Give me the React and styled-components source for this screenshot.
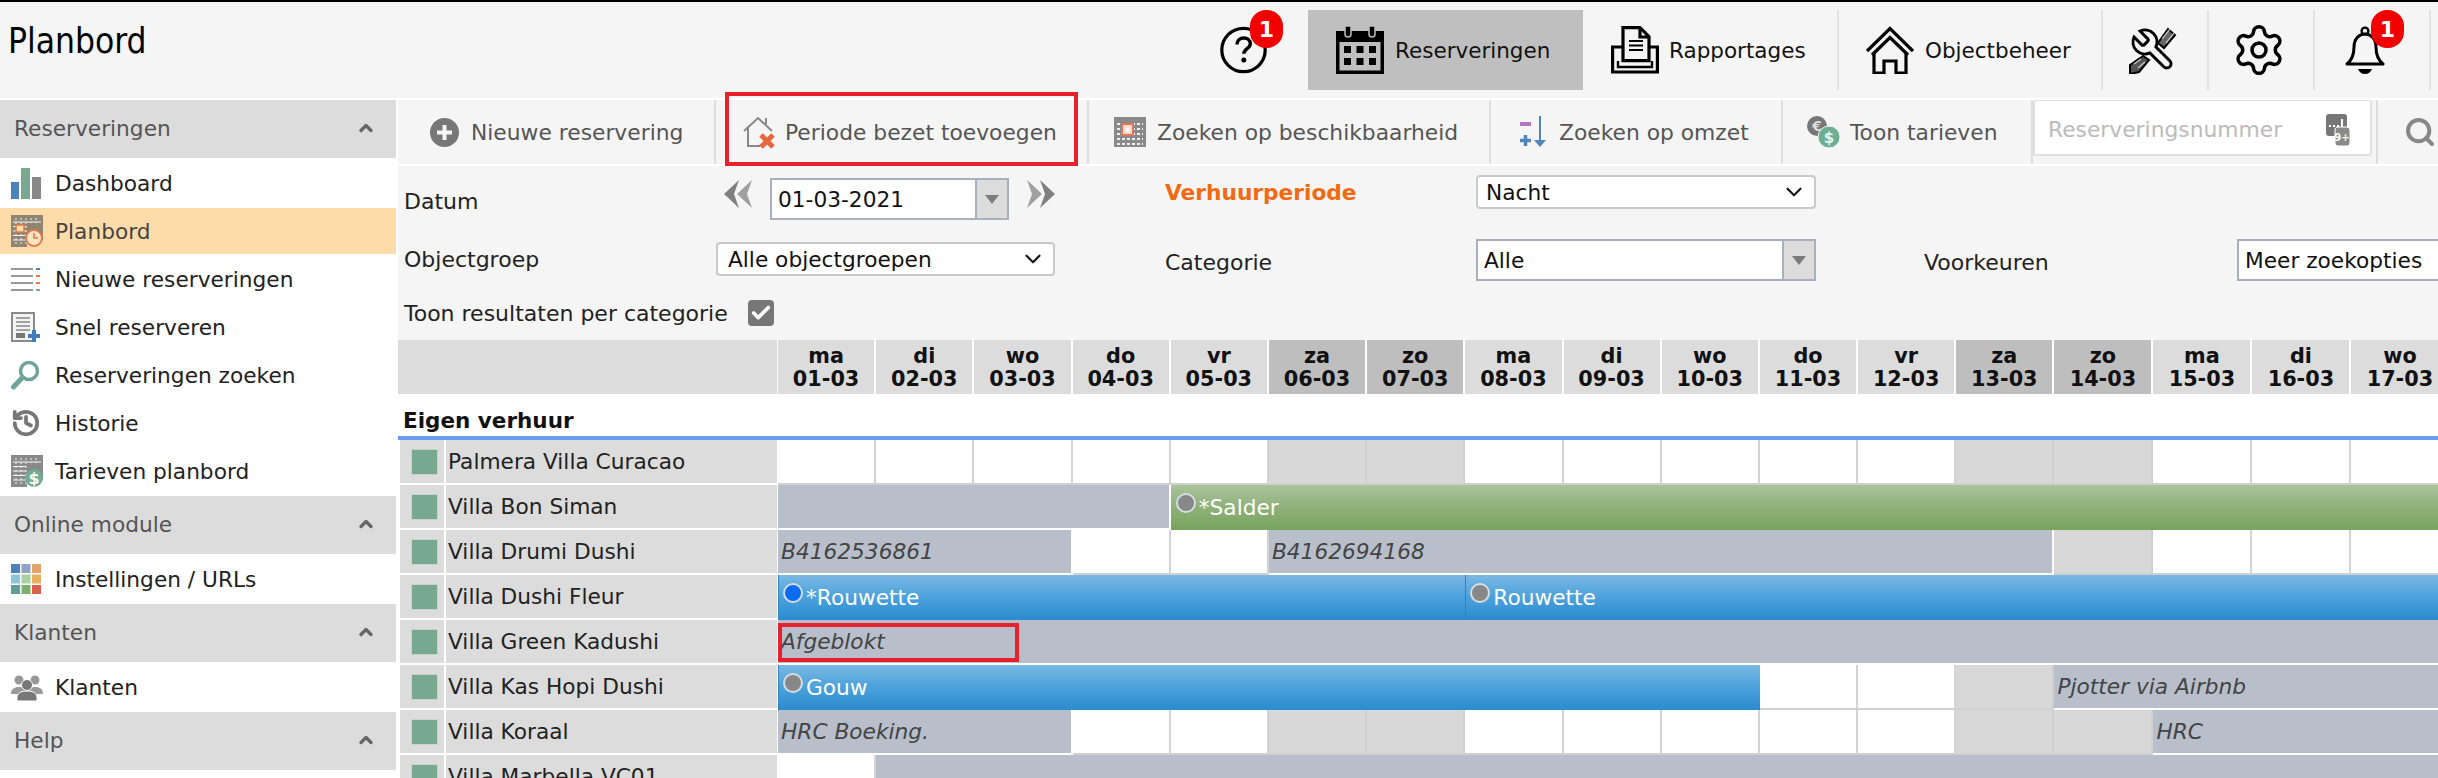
import React from "react";
import styled, { createGlobalStyle } from "styled-components";
import { Check, ChevronDown, ChevronUp, History, Search, Settings } from "lucide-react";

const GlobalStyle = createGlobalStyle`
  html, body {
    margin: 0;
    padding: 0;
    background: #fff;
    font-family: "DejaVu Sans", Verdana, sans-serif;
    font-size: 21.7px;
    overflow: hidden;
  }
  * { box-sizing: border-box; }
`;

const Page = styled.div`
  width: 2438px;
  height: 778px;
  overflow: hidden;
  display: flex;
  flex-direction: column;
`;

/* ---------- top bar ---------- */
const TopBar = styled.header`
  height: 98px;
  flex: none;
  border-top: 2px solid #000;
  background: #f5f5f5;
  display: flex;
  align-items: flex-start;
  justify-content: space-between;
  padding: 8px 7px 0 8px;
`;
const Title = styled.h1`
  margin: 11px 0 0;
  font-family: "DejaVu Sans Condensed", "DejaVu Sans", sans-serif;
  font-stretch: condensed;
  font-weight: 400;
  font-size: 35px;
  line-height: 40px;
  color: #000;
`;
const Nav = styled.nav`
  display: flex;
`;
const NavItem = styled.a`
  width: ${(p) => p.$w}px;
  height: 80px;
  padding-left: ${(p) => p.$pl}px;
  display: flex;
  align-items: center;
  gap: ${(p) => p.$gap || 10}px;
  color: #111;
  font-size: 21.5px;
  background: ${(p) => (p.$active ? "#bfbfbf" : "transparent")};
  border-right: ${(p) => (p.$active || p.$plain ? "0" : "2px solid #e2e2e2")};
`;
const IconWrap = styled.span`
  position: relative;
  display: flex;
  flex: none;
`;
const Badge = styled.span`
  position: absolute;
  top: -16px;
  left: ${(p) => p.$left}px;
  width: 33px;
  height: 38px;
  border-radius: 16px;
  background: #f20000;
  color: #fff;
  font-weight: 700;
  font-size: 22px;
  display: flex;
  align-items: center;
  justify-content: center;
`;

/* ---------- body ---------- */
const Body = styled.div`
  flex: 1;
  display: flex;
  gap: 2px;
  padding-top: 2px;
  min-height: 0;
`;
const Sidebar = styled.aside`
  width: 396px;
  flex: none;
`;
const GroupHead = styled.div`
  height: 58px;
  padding: 0 20px 2px 14px;
  background: #dcdcdc;
  color: #555;
  display: flex;
  align-items: center;
  justify-content: space-between;
`;
const MenuList = styled.div`
  padding-top: 2px;
`;
const MenuItem = styled.a`
  height: 46px;
  margin-bottom: 2px;
  padding-left: 11px;
  display: grid;
  grid-template-columns: 32px auto;
  justify-content: start;
  align-items: center;
  column-gap: 12px;
  color: ${(p) => (p.$active ? "#444" : "#222")};
  background: ${(p) => (p.$active ? "#fddcaa" : "transparent")};
`;

const Main = styled.main`
  flex: 1;
  min-width: 0;
`;
const Toolbar = styled.div`
  height: 66px;
  border-bottom: 2px solid #fff;
  background: #f5f5f5;
  display: flex;
  color: #555;
  font-size: 21.8px;
`;
const ToolItem = styled.a`
  position: relative;
  flex: none;
  width: ${(p) => p.$w}px;
  padding-left: ${(p) => p.$pl}px;
  display: flex;
  align-items: center;
  gap: ${(p) => p.$gap || 10}px;
  border-right: 2px solid #dedede;
  svg { flex: none; }
`;
const Highlight = styled.span`
  position: absolute;
  left: 9px;
  right: 9px;
  top: -8px;
  bottom: -2px;
  border: 4px solid #e6202c;
  pointer-events: none;
`;
const SearchBox = styled.div`
  width: 339px;
  height: 56px;
  margin: 0 4px 0 0;
  padding: 4px 20px 0 13px;
  flex: none;
  display: flex;
  align-items: center;
  justify-content: space-between;
  background: #fff;
  border: 2px solid #e0e0e0;
  border-top-width: 1px;
  border-radius: 3px;
  color: #bbb;
`;
const SearchButton = styled.a`
  flex: 1;
  padding-left: 26px;
  display: flex;
  align-items: center;
  border-left: 2px solid #dedede;
  color: #888;
`;

const Filters = styled.section`
  height: 174px;
  padding: 9px 0 0 6px;
  background: #f5f5f5;
  display: grid;
  grid-template-columns: 312px 449px 311px 448px 313px 1fr;
  grid-template-rows: 64px 57px 1fr;
  align-items: start;
  color: #222;
`;
const Label = styled.span`
  font-size: ${(p) => (p.$bold ? 21.7 : 22)}px;
  line-height: 24px;
  margin-top: ${(p) => p.$mt || 0}px;
  color: ${(p) => p.$color || "inherit"};
  font-weight: ${(p) => (p.$bold ? 700 : 400)};
`;
const DateRow = styled.div`
  padding-left: 8px;
  display: flex;
  gap: 18px;
  align-items: flex-start;
  svg { margin-top: 5px; flex: none; }
`;
const Combo = styled.div`
  width: ${(p) => p.$w}px;
  height: 42px;
  margin-top: ${(p) => p.$mt || 0}px;
  flex: none;
  display: flex;
  justify-content: space-between;
  align-items: center;
  padding-left: 6px;
  border: 2px solid #a9afbd;
  background: #fff;
  color: #111;
  white-space: nowrap;
`;
const ComboButton = styled.span`
  width: 32px;
  height: 100%;
  background: #dcdcdc;
  border-left: 2px solid #a9afbd;
  display: flex;
  align-items: center;
  justify-content: center;
  &::after {
    content: "";
    border: 7px solid transparent;
    border-top: 9px solid #7c7c7c;
    border-bottom: 0;
  }
`;
const Select = styled.div`
  width: ${(p) => p.$w}px;
  height: 34px;
  margin-top: ${(p) => p.$mt || 0}px;
  padding: 0 7px 0 ${(p) => p.$pl || 10}px;
  display: flex;
  align-items: center;
  justify-content: space-between;
  background: #fff;
  border: 2px solid #c9c9c9;
  border-radius: 4px;
  color: #111;
`;
const CheckRow = styled.div`
  grid-column: 1 / span 2;
  margin-top: 4px;
  display: flex;
  align-items: center;
  gap: 20px;
  font-size: 22px;
`;
const CheckBox = styled.span`
  width: 26px;
  height: 26px;
  border-radius: 4px;
  background: #777;
  color: #fff;
  display: flex;
  align-items: center;
  justify-content: center;
`;

/* ---------- planning board ---------- */
const COLUMNS = "380px repeat(13, 98.2px) repeat(4, 99px)";
const HeadRow = styled.div`
  display: grid;
  grid-template-columns: ${COLUMNS};
  height: 54px;
`;
const HeadBlank = styled.div`
  width: 379px;
  background: #dcdcdc;
`;
const DayHead = styled.div`
  background: ${(p) => (p.$weekend ? "#bebebe" : "#dcdcdc")};
  border-right: 2px solid #fff;
  font-weight: 700;
  font-size: 20.8px;
  line-height: 23px;
  text-align: center;
  color: #111;
  padding-top: 5px;
`;
const SectionTitle = styled.div`
  height: 46px;
  padding: 0 0 3px 5px;
  display: flex;
  align-items: flex-end;
  border-bottom: 4px solid #6a9bf0;
  font-weight: 700;
  font-size: 21.5px;
  line-height: 24px;
  color: #111;
`;
const Row = styled.div`
  display: grid;
  grid-template-columns: ${COLUMNS};
  grid-template-rows: 45px;
`;
const RowLabel = styled.div`
  grid-column: 1;
  grid-row: 1;
  height: 43px;
  width: 377px;
  margin-left: 2px;
  display: flex;
  gap: 2px;
`;
const StatusCell = styled.span`
  width: 44px;
  background: #dcdcdc;
  display: flex;
  align-items: center;
  justify-content: center;
  &::after {
    content: "";
    width: 25px;
    height: 24px;
    margin-left: 5px;
    background: #78a890;
    outline: 1px solid #c8d4cc;
  }
`;
const NameCell = styled.span`
  flex: 1;
  padding-left: 2px;
  background: #dcdcdc;
  color: #222;
  display: flex;
  align-items: center;
`;
const DayCell = styled.div`
  grid-row: 1;
  grid-column: ${(p) => p.$col};
  background: ${(p) => (p.$weekend ? "#d8d8d8" : "#fff")};
  border-right: 2px solid ${(p) => (p.$weekend ? "#cfcfcf" : "#d4d4d4")};
  border-bottom: 2px solid #d0d0d0;
`;
const Bar = styled.div`
  position: relative;
  z-index: 1;
  grid-row: 1;
  grid-column: ${(p) => p.$col};
  display: flex;
  align-items: center;
  white-space: nowrap;
  padding-left: 3px;
  ${(p) =>
    p.$kind === "blocked" &&
    `
    background: #b8bfcb;
    background-clip: padding-box;
    border-right: 2px solid #fff;
    border-bottom: 2px solid #fff;
    color: #444;
    font-style: italic;
  `}
  ${(p) =>
    p.$kind === "blue" &&
    `
    background: linear-gradient(#7ab9e3, #4fa3dc 45%, #2a8bd0);
    box-shadow: inset 1px 0 0 #2a84c6;
    color: #fff;
    padding-left: 5px;
  `}
  ${(p) =>
    p.$kind === "green" &&
    `
    background: linear-gradient(#a9c49b, #8eb07a 50%, #79a45c);
    color: #fff;
    padding-left: 5px;
  `}
`;
const Dot = styled.span`
  flex: none;
  width: 20px;
  height: 20px;
  margin: -9px 3px 0 0;
  border-radius: 50%;
  background: ${(p) => p.$color};
  border: 2px solid #d5dde3;
`;
const RedMark = styled.span`
  position: absolute;
  left: 0;
  top: 3px;
  width: 241px;
  height: 39px;
  border: 4px solid #e6202c;
`;

/* ---------- icons: top bar ---------- */
const HelpIcon = () => (
  <svg width="47" height="48" viewBox="0 0 47 48" fill="none" stroke="#000">
    <circle cx="23.5" cy="24" r="21.7" strokeWidth="3.2" />
    <path d="M17 18.5c0-4 3-6.5 6.8-6.5 3.700 0 6.500 2.300 6.500 5.700 0 4.800-6.500 5-6.500 10" strokeWidth="3.400" />
    <circle cx="23.800" cy="34" r="2.500" fill="#000" stroke="none" />
  </svg>
);
const CalendarIcon = () => (
  <svg width="48" height="48" viewBox="0 0 48 48">
    <path d="M0 5h48v43H0z" fill="#000" />
    <path d="M3.500 16h41v28.500h-41z" fill="#bfbfbf" />
    <path d="M8 20h7v7H8zM20.500 20h7v7h-7zM33 20h7v7h-7zM8 32h7v7H8zM20.500 32h7v7h-7zM33 32h7v7h-7z" fill="#000" />
    <path d="M9 0v8a3 3 0 0 0 6 0V0zM33 0v8a3 3 0 0 0 6 0V0z" fill="#000" stroke="#bfbfbf" strokeWidth="1.500" />
  </svg>
);
const ReportIcon = () => (
  <svg width="48" height="48" viewBox="0 0 48 48" fill="none" stroke="#000" strokeWidth="3.200">
    <path d="M12 1.600h17l9 9v24H12z" fill="#f5f5f5" />
    <path d="M29 2v9h9" />
    <path d="M18 15h14M18 19.500h14M18 24h14" strokeWidth="1.800" />
    <path d="M12 21H1.600v25h44.800V21H38" />
    <path d="M7 35v6h34v-6" strokeWidth="2.400" />
  </svg>
);
const HouseIcon = () => (
  <svg width="48" height="48" viewBox="0 0 48 48" fill="none" stroke="#000" strokeWidth="3.200">
    <path d="M1 25 24 2.500 47 25" />
    <path d="M6 29 24 11.500 42 29" />
    <path d="M8 27v20h10V35h12v12h10V27" />
  </svg>
);
const ToolsIcon = () => (
  <svg width="48" height="48" viewBox="0 0 48 48" fill="none" stroke="#000">
    <g transform="translate(48 0) scale(-2 2)" strokeWidth="1.500">
      <path d="M14.700 6.300a1 1 0 0 0 0 1.400l1.600 1.600a1 1 0 0 0 1.400 0l3.770-3.770a6 6 0 0 1-7.940 7.940l-6.910 6.910a2.120 2.120 0 0 1-3-3l6.910-6.910a6 6 0 0 1 7.940-7.940l-3.760 3.760z" />
    </g>
    <path d="M29 17 39 3l7 6-11 13z" fill="#666" strokeWidth="2" />
    <path d="M33 13l8-10M37 17l8-10" stroke="#ddd" strokeWidth="1.200" />
    <path d="M14 30 1 39v9l9-2 10-12z" fill="#555" strokeWidth="2" />
    <path d="M5 38l7-5M9 42l7-6" stroke="#ccc" strokeWidth="1.200" />
  </svg>
);
const BellIcon = () => (
  <svg width="40" height="48" viewBox="0 0 40 48" fill="none" stroke="#000">
    <circle cx="20" cy="5" r="3.400" strokeWidth="2.400" />
    <path d="M2 38c5-4 7-9 7-17 0-8 5-13 11-13s11 5 11 13c0 8 2 13 7 17z" strokeWidth="3" strokeLinejoin="round" />
    <path d="M13 43h14c-1 3-4 5-7 5s-6-2-7-5z" fill="#000" stroke="none" />
  </svg>
);

/* ---------- icons: side menu ---------- */
const GridBase = ({ colour = "#8a8a8a" }) => (
  <>
    <path d="M0 0h32v25H16v7H0z" fill={colour} />
    <path d="M2 7h28M2 11.500h13M2 16h13M2 20.500h13M2 25h13" stroke="#f5f5f5" strokeWidth="1" />
    <path d="M5 3v26M10 3v26M15 3v26M20 3v5M25 3v5" stroke="#f5f5f5" strokeWidth="1" strokeDasharray="2 2" />
  </>
);
const BarsIcon = () => (
  <svg width="30" height="31" viewBox="0 0 30 31">
    <path d="M0 14h8v17H0z" fill="#4a82bd" />
    <path d="M10 0h9v31h-9z" fill="#78a890" />
    <path d="M21 9h9v22h-9z" fill="#888" />
  </svg>
);
const PlanIcon = () => (
  <svg width="32" height="32" viewBox="0 0 32 32">
    <GridBase colour="#8f8572" />
    <path d="M5 10h8v7H5z" fill="#fddcaa" stroke="#e07a4a" strokeWidth="1.500" />
    <circle cx="23" cy="23" r="8" fill="#fde4c4" stroke="#e07a4a" strokeWidth="2" />
    <path d="M23 18v5h4" fill="none" stroke="#e07a4a" strokeWidth="1.600" />
  </svg>
);
const ListIcon = () => (
  <svg width="30" height="24" viewBox="0 0 30 24">
    <path d="M0 2h22M0 9h22M0 16h22M0 23h22" stroke="#999" strokeWidth="2" />
    <path d="M25 2h4" stroke="#4a82bd" strokeWidth="2" />
    <path d="M25 9h4M25 16h4" stroke="#e07a4a" strokeWidth="2" />
    <path d="M25 23h4" stroke="#78a890" strokeWidth="2" />
  </svg>
);
const QuickIcon = () => (
  <svg width="30" height="31" viewBox="0 0 30 31">
    <path d="M1 1h22v28H1z" fill="#f3f3f3" stroke="#8a8a8a" strokeWidth="2" />
    <path d="M5 6h14M5 10h14M5 14h14M5 18h14" stroke="#888" strokeWidth="1.600" />
    <path d="M5 21h9v5H5z" fill="#777" />
    <path d="M23 18v12M17 24h12" stroke="#3f7dbb" strokeWidth="4" />
  </svg>
);
const LensIcon = () => (
  <svg width="30" height="30" viewBox="0 0 30 30" fill="none" stroke="#6fa598">
    <circle cx="18" cy="11" r="8.500" strokeWidth="3.500" />
    <path d="M11 18 2.500 27" strokeWidth="5" strokeLinecap="round" />
  </svg>
);
const RatesIcon = () => (
  <svg width="32" height="32" viewBox="0 0 32 32">
    <GridBase />
    <circle cx="23" cy="23" r="9" fill="#6fae95" />
    <text x="23" y="29" textAnchor="middle" fontSize="16" fontWeight="700" fill="#fff" fontFamily="DejaVu Sans">$</text>
  </svg>
);
const TILES = ["#4a82bd", "#8fa3c4", "#e3a368", "#8cc4d8", "#a8d0a0", "#e8b060", "#5f9f95", "#7fb070", "#d9604a"];
const TilesIcon = () => (
  <svg width="30" height="30" viewBox="0 0 30 30">
    {TILES.map((c, i) => (
      <rect key={c} x={(i % 3) * 10.500} y={Math.floor(i / 3) * 10.500} width="9" height="9" fill={c} />
    ))}
  </svg>
);
const PeopleIcon = () => (
  <svg width="32" height="28" viewBox="0 0 32 28" fill="#999">
    <circle cx="8" cy="7" r="4.500" />
    <circle cx="24" cy="7" r="4.500" />
    <path d="M0 21c0-5 3-7 8-7s8 2 8 7zM16 21c0-5 3-7 8-7s8 2 8 7z" />
    <circle cx="16" cy="12" r="5.500" fill="#777" stroke="#fff" />
    <path d="M6 28v-3c0-5 4-7 10-7s10 2 10 7v3z" fill="#777" stroke="#fff" />
  </svg>
);

/* ---------- icons: toolbar ---------- */
const PlusCircle = () => (
  <svg width="29" height="29" viewBox="0 0 29 29">
    <circle cx="14.500" cy="14.500" r="14.500" fill="#777" />
    <path d="M14.500 7v15M7 14.500h15" stroke="#f5f5f5" strokeWidth="4" />
  </svg>
);
const HouseBlocked = () => (
  <svg width="33" height="33" viewBox="0 0 33 33" fill="none">
    <path d="M1 15 15 2l14 13M5 12v18h12M23 2v6" stroke="#888" strokeWidth="2" />
    <path d="M18 19l12 12M30 19 18 31" stroke="#e8663c" strokeWidth="5" />
  </svg>
);
const AvailabilityIcon = () => (
  <svg width="32" height="30" viewBox="0 0 32 30">
    <path d="M0 0h32v30H0z" fill="#8a8a8a" />
    <path d="M3 7h26M3 12h26M3 17h26M3 22h26M3 27h26" stroke="#eee" strokeWidth="2" strokeDasharray="3 2" />
    <path d="M8 7h11v11H8z" fill="#f3d8cc" stroke="#e0765a" strokeWidth="2" />
    <path d="M11.500 10.500h4v4h-4z" fill="#fff" />
  </svg>
);
const SortIcon = () => (
  <svg width="29" height="32" viewBox="0 0 29 32" fill="none">
    <path d="M1 8h11" stroke="#b573c4" strokeWidth="4" />
    <path d="M6.500 19v11M1 24.500h11" stroke="#4f86bb" strokeWidth="3.500" />
    <path d="M21 0v28" stroke="#4f86bb" strokeWidth="2" />
    <path d="M15 24h12l-6 7z" fill="#4f86bb" />
  </svg>
);
const CoinsIcon = () => (
  <svg width="33" height="32" viewBox="0 0 33 32">
    <circle cx="10" cy="10" r="10" fill="#777" />
    <text x="10" y="15" textAnchor="middle" fontSize="14" fontWeight="700" fill="#ddd" fontFamily="DejaVu Sans">€</text>
    <circle cx="22" cy="21" r="11" fill="#6fae95" stroke="#f5f5f5" />
    <text x="22" y="27" textAnchor="middle" fontSize="15" fontWeight="700" fill="#e8f3ee" fontFamily="DejaVu Sans">$</text>
  </svg>
);
const NumbersIcon = () => (
  <svg width="24" height="32" viewBox="0 0 24 32">
    <rect width="21" height="22" rx="3" fill="#777" />
    <rect x="9" y="13" width="15" height="19" rx="3" fill="#8a8a8a" stroke="#fff" />
    <path d="M3 12h2M7 12h2M11 12h2M16 5v8" stroke="#fff" strokeWidth="2" />
    <text x="16" y="27" textAnchor="middle" fontSize="10" fontWeight="700" fill="#fff" fontFamily="DejaVu Sans">9+</text>
  </svg>
);
const DoubleArrow = ({ flip }) => (
  <svg width="28" height="28" viewBox="0 0 28 28" style={flip ? { transform: "scaleX(-1)" } : undefined}>
    <path d="M28 0 13 14l15 14-5-14z" fill="#a0a0a0" />
    <path d="M15 0 0 14l15 14-5-14z" fill="#808080" />
  </svg>
);

/* ---------- data ---------- */
const WEEKDAYS = ["ma", "di", "wo", "do", "vr", "za", "zo"];
const DAYS = Array.from({ length: 17 }, (_, i) => ({
  name: WEEKDAYS[i % 7],
  date: `${String(i + 1).padStart(2, "0")}-03`,
  weekend: i % 7 === 5 || i % 7 === 6,
}));

const GROUPS = [
  {
    title: "Reserveringen",
    items: [
      { label: "Dashboard", icon: <BarsIcon /> },
      { label: "Planbord", icon: <PlanIcon />, active: true },
      { label: "Nieuwe reserveringen", icon: <ListIcon /> },
      { label: "Snel reserveren", icon: <QuickIcon /> },
      { label: "Reserveringen zoeken", icon: <LensIcon /> },
      { label: "Historie", icon: <History size={30} color="#777" strokeWidth={3} /> },
      { label: "Tarieven planbord", icon: <RatesIcon /> },
    ],
  },
  { title: "Online module", items: [{ label: "Instellingen / URLs", icon: <TilesIcon /> }] },
  { title: "Klanten", items: [{ label: "Klanten", icon: <PeopleIcon /> }] },
  { title: "Help", items: [] },
];

const ROWS = [
  { name: "Palmera Villa Curacao", bars: [] },
  {
    name: "Villa Bon Siman",
    bars: [
      { from: 1, to: 5, kind: "blocked" },
      { from: 5, to: 18, kind: "green", text: "*Salder", dot: "#888" },
    ],
  },
  {
    name: "Villa Drumi Dushi",
    bars: [
      { from: 1, to: 4, kind: "blocked", text: "B4162536861" },
      { from: 6, to: 14, kind: "blocked", text: "B4162694168" },
    ],
  },
  {
    name: "Villa Dushi Fleur",
    bars: [
      { from: 1, to: 8, kind: "blue", text: "*Rouwette", dot: "#0a6cf0" },
      { from: 8, to: 18, kind: "blue", text: "Rouwette", dot: "#888" },
    ],
  },
  { name: "Villa Green Kadushi", bars: [{ from: 1, to: 18, kind: "blocked", text: "Afgeblokt", marked: true }] },
  {
    name: "Villa Kas Hopi Dushi",
    bars: [
      { from: 1, to: 11, kind: "blue", text: "Gouw", dot: "#888" },
      { from: 14, to: 18, kind: "blocked", text: "Pjotter via Airbnb" },
    ],
  },
  {
    name: "Villa Koraal",
    bars: [
      { from: 1, to: 4, kind: "blocked", text: "HRC Boeking." },
      { from: 15, to: 18, kind: "blocked", text: "HRC" },
    ],
  },
  { name: "Villa Marbella VC01", bars: [{ from: 2, to: 18, kind: "blocked" }] },
];

const App = () => (
  <Page>
    <GlobalStyle />
    <TopBar>
      <Title>Planbord</Title>
      <Nav>
        <NavItem $w={108} $pl={20} $plain>
          <IconWrap>
            <HelpIcon />
            <Badge $left={30}>1</Badge>
          </IconWrap>
        </NavItem>
        <NavItem $w={275} $pl={28} $gap={11} $active>
          <CalendarIcon />
          Reserveringen
        </NavItem>
        <NavItem $w={256} $pl={28}>
          <ReportIcon />
          Rapportages
        </NavItem>
        <NavItem $w={264} $pl={27} $gap={11}>
          <HouseIcon />
          Objectbeheer
        </NavItem>
        <NavItem $w={106} $pl={26}>
          <ToolsIcon />
        </NavItem>
        <NavItem $w={106} $pl={22}>
          <Settings size={56} strokeWidth={1.5} color="#000" />
        </NavItem>
        <NavItem $w={116} $pl={30}>
          <IconWrap>
            <BellIcon />
            <Badge $left={26}>1</Badge>
          </IconWrap>
        </NavItem>
      </Nav>
    </TopBar>

    <Body>
      <Sidebar>
        {GROUPS.map((group) => (
          <div key={group.title}>
            <GroupHead>
              {group.title}
              <ChevronUp size={20} strokeWidth={4} color="#666" />
            </GroupHead>
            {group.items.length > 0 && (
              <MenuList>
                {group.items.map((item) => (
                  <MenuItem key={item.label} $active={item.active}>
                    {item.icon}
                    {item.label}
                  </MenuItem>
                ))}
              </MenuList>
            )}
          </div>
        ))}
      </Sidebar>

      <Main>
        <Toolbar>
          <ToolItem $w={318} $pl={32} $gap={12}>
            <PlusCircle />
            Nieuwe reservering
          </ToolItem>
          <ToolItem $w={373} $pl={27} $gap={9}>
            <HouseBlocked />
            Periode bezet toevoegen
            <Highlight />
          </ToolItem>
          <ToolItem $w={402} $pl={25} $gap={11}>
            <AvailabilityIcon />
            Zoeken op beschikbaarheid
          </ToolItem>
          <ToolItem $w={292} $pl={28} $gap={11}>
            <SortIcon />
            Zoeken op omzet
          </ToolItem>
          <ToolItem $w={250} $pl={24} $gap={10}>
            <CoinsIcon />
            Toon tarieven
          </ToolItem>
          <SearchBox>
            Reserveringsnummer
            <NumbersIcon />
          </SearchBox>
          <SearchButton>
            <Search size={32} strokeWidth={3} />
          </SearchButton>
        </Toolbar>

        <Filters>
          <Label $mt={15}>Datum</Label>
          <DateRow>
            <DoubleArrow />
            <Combo $w={239} $mt={3}>
              01-03-2021
              <ComboButton />
            </Combo>
            <DoubleArrow flip />
          </DateRow>
          <Label $mt={6} $bold $color="#f26a10">
            Verhuurperiode
          </Label>
          <Select $w={340} $pl={8}>
            Nacht
            <ChevronDown size={26} strokeWidth={2} />
          </Select>
          <span />
          <span />

          <Label $mt={9}>Objectgroep</Label>
          <Select $w={339} $mt={3}>
            Alle objectgroepen
            <ChevronDown size={26} strokeWidth={2} />
          </Select>
          <Label $mt={12}>Categorie</Label>
          <Combo $w={340}>
            Alle
            <ComboButton />
          </Combo>
          <Label $mt={12}>Voorkeuren</Label>
          <Combo $w={260}>Meer zoekopties</Combo>

          <CheckRow>
            Toon resultaten per categorie
            <CheckBox>
              <Check size={22} strokeWidth={4} />
            </CheckBox>
          </CheckRow>
        </Filters>

        <HeadRow>
          <HeadBlank />
          {DAYS.map((day) => (
            <DayHead key={day.date} $weekend={day.weekend}>
              {day.name}
              <br />
              {day.date}
            </DayHead>
          ))}
        </HeadRow>

        <SectionTitle>Eigen verhuur</SectionTitle>

        {ROWS.map((row) => (
          <Row key={row.name}>
            <RowLabel>
              <StatusCell />
              <NameCell>{row.name}</NameCell>
            </RowLabel>
            {DAYS.map((day, i) => (
              <DayCell key={day.date} $col={i + 2} $weekend={day.weekend} />
            ))}
            {row.bars.map((bar) => (
              <Bar key={bar.from} $kind={bar.kind} $col={`${bar.from + 1} / ${bar.to + 1}`}>
                {bar.dot && <Dot $color={bar.dot} />}
                {bar.text}
                {bar.marked && <RedMark />}
              </Bar>
            ))}
          </Row>
        ))}
      </Main>
    </Body>
  </Page>
);

export default App;
